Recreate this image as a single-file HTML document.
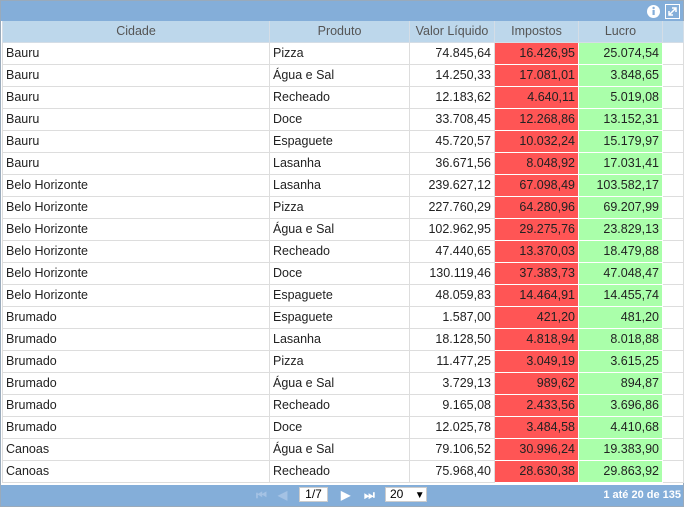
<!DOCTYPE html>
<html><head><style>
body{margin:0;width:684px;height:507px;overflow:hidden;background:#fff;font-family:"Liberation Sans",sans-serif;font-size:12px;color:#222}
.p{position:absolute;left:0;top:0;width:682px;height:505px;border:1px solid #9ab;background:#fff}
.top{position:absolute;left:0;top:0;width:682px;height:20px;background:#84aed9}
.ic{position:absolute;top:3px;width:15px;height:15px;border:1px solid #fff;box-sizing:border-box}
table{position:absolute;left:1px;top:20px;border-collapse:collapse;table-layout:fixed;width:681px;font-size:12.5px}
td,th{height:22px;padding:0 3px;border:1px solid #ddd;white-space:nowrap;overflow:hidden;box-sizing:border-box}
th{height:21px;background:#bdd7eb;font-weight:normal;color:#555;border-color:#d4dde6;border-top:none}
td.n{text-align:right}
td.r{background:#ff5555;text-align:right;border-color:#fff}
td.g{background:#aaffaa;text-align:right;border-color:#fff}
.f{position:absolute;left:0;top:484px;width:682px;height:21px;background:#84aed9;color:#fff;font-weight:bold}
.box{position:absolute;background:#fff;color:#000;font-weight:normal;height:15px;top:2px;border:1px solid #ccc;box-sizing:border-box;line-height:13px}
</style></head><body><div class="p">
<div class="top">
<div class="ic" style="left:645px;border:none"><svg width="15" height="15"><circle cx="7.5" cy="7.5" r="6.5" fill="#fff"/><rect x="6.5" y="6" width="2.2" height="5" fill="#84aed9"/><circle cx="7.6" cy="4" r="1.2" fill="#84aed9"/></svg></div>
<div class="ic" style="left:664px"><svg width="13" height="13"><path d="M3 10L10 3M6 3h4v4M3 6v4h4" stroke="#fff" stroke-width="1.5" fill="none"/></svg></div>
</div>
<table>
<colgroup><col style="width:267px"><col style="width:140px"><col style="width:85px"><col style="width:84px"><col style="width:84px"><col style="width:21px"></colgroup>
<tr><th>Cidade</th><th>Produto</th><th>Valor Líquido</th><th>Impostos</th><th>Lucro</th><th></th></tr>
<tr><td>Bauru</td><td>Pizza</td><td class="n">74.845,64</td><td class="r">16.426,95</td><td class="g">25.074,54</td><td></td></tr>
<tr><td>Bauru</td><td>Água e Sal</td><td class="n">14.250,33</td><td class="r">17.081,01</td><td class="g">3.848,65</td><td></td></tr>
<tr><td>Bauru</td><td>Recheado</td><td class="n">12.183,62</td><td class="r">4.640,11</td><td class="g">5.019,08</td><td></td></tr>
<tr><td>Bauru</td><td>Doce</td><td class="n">33.708,45</td><td class="r">12.268,86</td><td class="g">13.152,31</td><td></td></tr>
<tr><td>Bauru</td><td>Espaguete</td><td class="n">45.720,57</td><td class="r">10.032,24</td><td class="g">15.179,97</td><td></td></tr>
<tr><td>Bauru</td><td>Lasanha</td><td class="n">36.671,56</td><td class="r">8.048,92</td><td class="g">17.031,41</td><td></td></tr>
<tr><td>Belo Horizonte</td><td>Lasanha</td><td class="n">239.627,12</td><td class="r">67.098,49</td><td class="g">103.582,17</td><td></td></tr>
<tr><td>Belo Horizonte</td><td>Pizza</td><td class="n">227.760,29</td><td class="r">64.280,96</td><td class="g">69.207,99</td><td></td></tr>
<tr><td>Belo Horizonte</td><td>Água e Sal</td><td class="n">102.962,95</td><td class="r">29.275,76</td><td class="g">23.829,13</td><td></td></tr>
<tr><td>Belo Horizonte</td><td>Recheado</td><td class="n">47.440,65</td><td class="r">13.370,03</td><td class="g">18.479,88</td><td></td></tr>
<tr><td>Belo Horizonte</td><td>Doce</td><td class="n">130.119,46</td><td class="r">37.383,73</td><td class="g">47.048,47</td><td></td></tr>
<tr><td>Belo Horizonte</td><td>Espaguete</td><td class="n">48.059,83</td><td class="r">14.464,91</td><td class="g">14.455,74</td><td></td></tr>
<tr><td>Brumado</td><td>Espaguete</td><td class="n">1.587,00</td><td class="r">421,20</td><td class="g">481,20</td><td></td></tr>
<tr><td>Brumado</td><td>Lasanha</td><td class="n">18.128,50</td><td class="r">4.818,94</td><td class="g">8.018,88</td><td></td></tr>
<tr><td>Brumado</td><td>Pizza</td><td class="n">11.477,25</td><td class="r">3.049,19</td><td class="g">3.615,25</td><td></td></tr>
<tr><td>Brumado</td><td>Água e Sal</td><td class="n">3.729,13</td><td class="r">989,62</td><td class="g">894,87</td><td></td></tr>
<tr><td>Brumado</td><td>Recheado</td><td class="n">9.165,08</td><td class="r">2.433,56</td><td class="g">3.696,86</td><td></td></tr>
<tr><td>Brumado</td><td>Doce</td><td class="n">12.025,78</td><td class="r">3.484,58</td><td class="g">4.410,68</td><td></td></tr>
<tr><td>Canoas</td><td>Água e Sal</td><td class="n">79.106,52</td><td class="r">30.996,24</td><td class="g">19.383,90</td><td></td></tr>
<tr><td>Canoas</td><td>Recheado</td><td class="n">75.968,40</td><td class="r">28.630,38</td><td class="g">29.863,92</td><td></td></tr>
</table>
<div class="f">
<span style="position:absolute;left:255px;top:3px;color:#a4c2e4">⏮</span>
<span style="position:absolute;left:277px;top:3px;color:#a4c2e4">◀</span>
<div class="box" style="left:298px;width:29px;text-align:center">1/7</div>
<span style="position:absolute;left:340px;top:3px">▶</span>
<span style="position:absolute;left:363px;top:3px">⏭</span>
<div class="box" style="left:384px;width:42px;padding-left:4px">20 <span style="font-size:10px;margin-left:8px">▼</span></div>
<span style="position:absolute;right:2px;top:4px;font-size:11px">1 até 20 de 135</span>
</div>
</div></body></html>
